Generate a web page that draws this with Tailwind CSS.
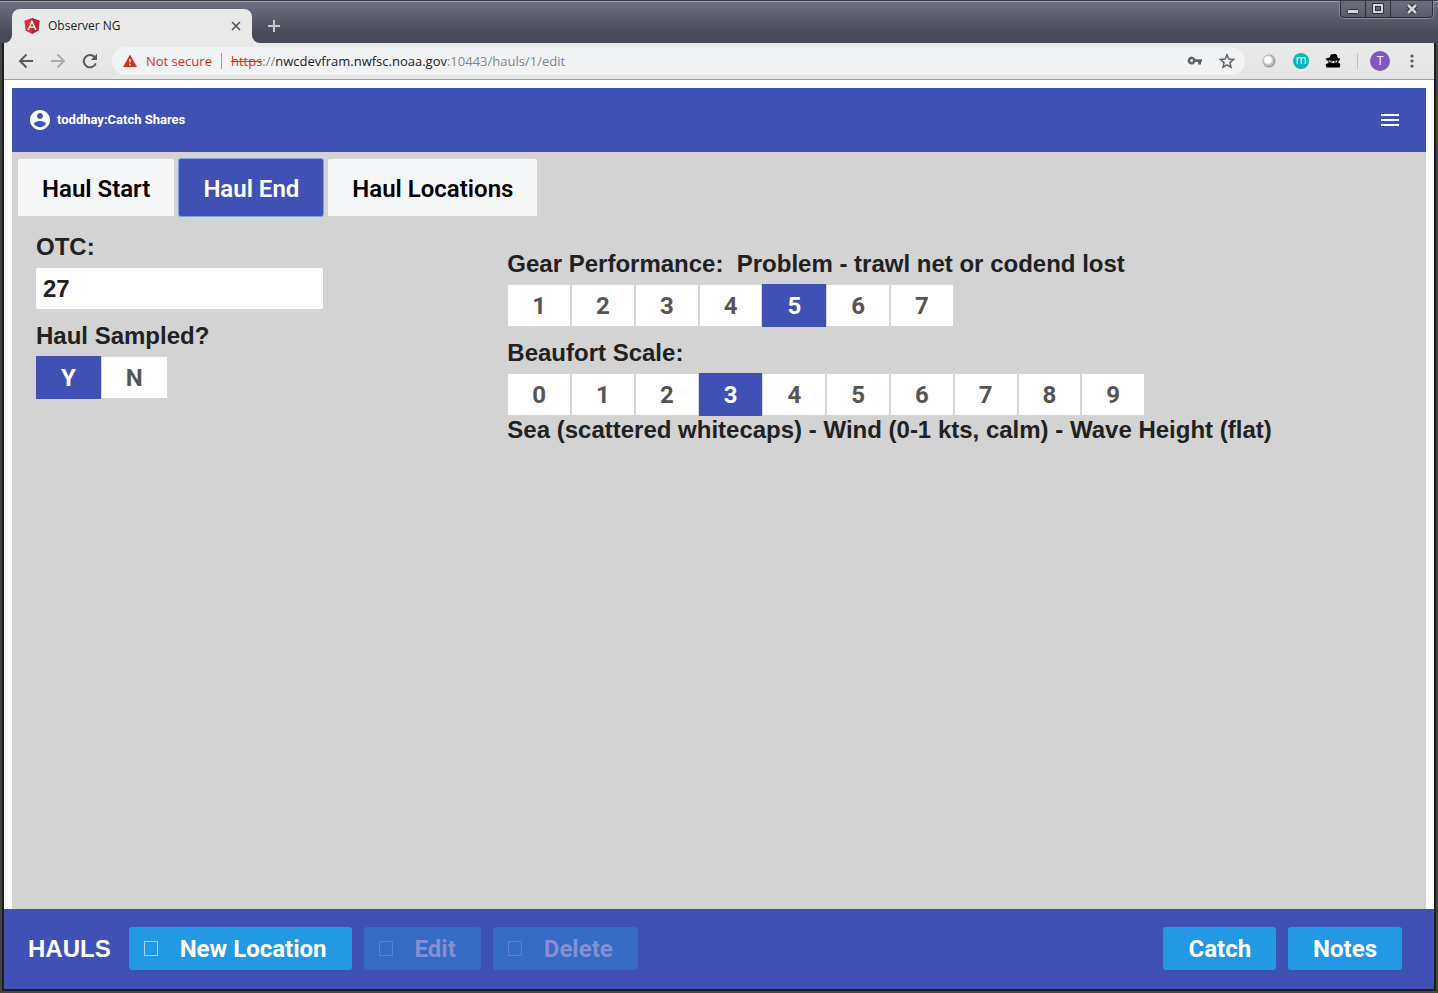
<!DOCTYPE html>
<html lang="en">
<head>
<meta charset="utf-8">
<meta name="viewport" content="width=device-width, initial-scale=1">
<title>Observer NG</title>
<script src="https://cdn.jsdelivr.net/npm/@tailwindcss/browser@4"></script>
</head>
<body class="bg-[#222222]">
<div class="flex min-h-screen flex-col font-['Liberation_Sans',sans-serif] text-[#212121]">

  <!-- Window title bar -->
  <header class="flex h-[43px] items-start justify-between border-t border-[#3b3d46] bg-linear-to-b from-[#6d7080] to-[#484a57] to-80% pl-1 font-['Open_Sans',sans-serif] shadow-[inset_0_1px_0_#9a9caa]">
    <div class="flex h-[42px] items-end">
      <svg class="h-2 w-2 fill-[#e9e9e9]" viewBox="0 0 8 8"><path d="M8 0v8H0a8 8 0 0 0 8-8z"/></svg>
      <div class="flex h-[34px] w-60 items-center rounded-t-lg bg-[#e9e9e9] pr-[10px] pl-3">
        <svg class="h-4 w-4" viewBox="0 0 16 16"><path fill="#dd3037" d="M8 0 15.600 2.700 14.400 12.500 8 16 1.600 12.500.4 2.700z"/><path fill="#b5272d" d="M8 0 15.600 2.700 14.400 12.500 8 16z"/><path fill="#fff" fill-rule="evenodd" d="M8 1.800 12.600 12h-1.700L10 9.800H6L5.100 12H3.400zM8 5 6.600 8.400h2.800z"/></svg>
        <span class="ml-2 flex-1 text-[12px] text-[#202124]">Observer NG</span>
        <button aria-label="Close tab" class="flex h-3 w-3 items-center justify-center"><svg class="h-3 w-3 stroke-[#505256]" viewBox="0 0 12 12" fill="none" stroke-width="1.600"><path d="m2 2 8 8M10 2 2 10"/></svg></button>
      </div>
      <svg class="h-2 w-2 fill-[#e9e9e9]" viewBox="0 0 8 8"><path d="M0 0v8h8a8 8 0 0 1-8-8z"/></svg>
      <button aria-label="New tab" class="mb-[11px] ml-2 h-3 w-3"><svg class="h-3 w-3 stroke-[#c9cace]" viewBox="0 0 12 12" fill="none" stroke-width="2"><path d="M6 0v12M0 6h12"/></svg></button>
    </div>
    <div class="mr-[5px] flex h-[17px] rounded-b border border-t-0 border-[#2c2e36] bg-linear-to-b from-[#6b6e7d] to-[#5a5d69] shadow-[0_1px_0_#858793,1px_0_0_#858793,-1px_0_0_#858793]">
      <button aria-label="Minimize" class="flex w-[25px] items-center justify-center border-r border-[#2c2e36]"><svg class="h-3 w-3" viewBox="0 0 12 12"><rect x=".5" y="6.500" width="11" height="4" rx="1" fill="#d4d4d6" stroke="#33353d"/></svg></button>
      <button aria-label="Maximize" class="flex w-[25px] items-center justify-center border-r border-[#2c2e36]"><svg class="h-3 w-3" viewBox="0 0 12 12" fill="none"><rect x="2" y="2" width="8" height="7" stroke="#33353d" stroke-width="4"/><rect x="2" y="2" width="8" height="7" stroke="#d4d4d6" stroke-width="2"/></svg></button>
      <button aria-label="Close" class="flex w-[41px] items-center justify-center"><svg class="h-3 w-3" viewBox="0 0 12 12" fill="none"><path d="m2 2 8 8M10 2 2 10" stroke="#33353d" stroke-width="5"/><path d="m2 2 8 8M10 2 2 10" stroke="#d4d4d6" stroke-width="2.500"/></svg></button>
    </div>
  </header>

  <div class="flex flex-1 flex-col border-x-2 border-b-2 border-[#454545]">
  <div class="flex flex-1 flex-col border-x-2 border-b-2 border-[#1f1f1f] bg-white">
    <!-- Browser toolbar -->
    <div class="flex h-[37px] items-center border-b border-[#a0a0a0] bg-linear-to-b from-[#e9e9e9] to-[#e5e5e5] pr-[14px] pl-[14px] font-['Open_Sans',sans-serif] text-[14px]">
      <button aria-label="Back"><svg class="h-4 w-4 stroke-[#5a5a5a]" viewBox="0 0 16 16" fill="none" stroke-width="2"><path d="M15 8H2M8.500 1.500 2 8l6.500 6.500"/></svg></button>
      <button aria-label="Forward" class="ml-4"><svg class="h-4 w-4 stroke-[#acacac]" viewBox="0 0 16 16" fill="none" stroke-width="2"><path d="M1 8h13M7.500 1.500 14 8l-6.500 6.500"/></svg></button>
      <button aria-label="Reload" class="ml-4"><svg class="h-4 w-4" viewBox="0 0 16 16"><path d="M13.800 10.300A6.200 6.200 0 1 1 12.600 4" fill="none" stroke="#5a5a5a" stroke-width="2"/><path d="M15 .8V7H8.800z" fill="#5a5a5a"/></svg></button>
      <div class="ml-[14px] flex h-7 flex-1 items-center rounded-full bg-[#f1f3f4] pr-[10px] pl-[11px]">
        <svg class="h-[14px] w-[14px]" viewBox="0 0 14 14"><path fill="#d93025" d="M7 .5 14 13H0z"/><path fill="#fff" d="M6.300 5h1.400v3.500H6.300zM6.300 9.800h1.400v1.400H6.300z"/></svg>
        <span class="ml-[9px] pt-px text-[13px] text-[#d93025]">Not secure</span>
        <span class="mx-[9px] h-4 w-px bg-[#9a9c9f]"></span>
        <span class="flex-1 pt-px text-[13px] whitespace-nowrap text-[#80868b]"><span class="text-[#d93025] line-through">https</span>://<span class="text-[#202124]">nwcdevfram.nwfsc.noaa.gov</span>:10443/hauls/1/edit</span>
        <button aria-label="Saved passwords"><svg class="h-4 w-4 fill-[#5f6368]" viewBox="0 0 16 16"><path fill-rule="evenodd" d="M8.300 6.200A4 4 0 1 0 8.300 9H11v2.500h3V9h1V6.200zM4.600 6.200a1.400 1.400 0 1 1 0 2.800 1.400 1.400 0 0 1 0-2.800z"/></svg></button>
        <button aria-label="Bookmark this page" class="ml-4"><svg class="h-4 w-4 stroke-[#5f6368]" viewBox="0 0 16 16" fill="none" stroke-width="1.500"><path d="m8 1.800 1.800 4.300 4.700.4-3.600 3.100 1.100 4.600L8 11.800l-4 2.400 1.100-4.600L1.500 6.500l4.700-.4z"/></svg></button>
      </div>
      <div class="ml-4 flex items-center">
        <svg class="h-4 w-4" viewBox="0 0 16 16"><circle cx="8" cy="8" r="6.500" fill="#9b9b9b"/><circle cx="7.500" cy="7.500" r="5.500" fill="#c8c8c8"/><circle cx="7" cy="7" r="3.800" fill="#fff"/></svg>
        <span class="ml-4 flex h-4 w-4 items-center justify-center rounded-full bg-linear-to-b from-[#08c0a0] to-[#0eacc4] pb-[2px] text-[12px] leading-none text-white">m</span>
        <svg class="ml-4 h-4 w-4" viewBox="0 0 16 16"><path d="M5.500 2 7 1l1.500.3L10 .8l2 1.200.8 3 2.200.5v1.300L13.500 8v2l1.800 1-.6 3.500H1L1.600 13l-1-.5.4-1.500 2.500-1V8.300L1.200 7 .8 5.600 4.800 4.600z"/><path d="M3.500 7.300q4.500 1.500 9 0l-1.200 2.500q-4 1-6.600-.7z" fill="#e8e8e8"/><path d="M5.500 8.400h2v.9h-2zM9 8.600h2v.8H9z"/></svg>
        <span class="ml-4 h-4 w-px bg-[#bdbdbd]"></span>
        <button class="ml-3 flex h-5 w-5 items-center justify-center rounded-full bg-[#7e57c2] font-['Roboto',sans-serif] text-[12px] text-white/90" aria-label="Profile T">T</button>
        <button aria-label="Browser menu" class="ml-[14px]"><svg class="h-4 w-4 fill-[#5a5a5a]" viewBox="0 0 16 16"><circle cx="8" cy="3" r="1.600"/><circle cx="8" cy="8" r="1.600"/><circle cx="8" cy="13" r="1.600"/></svg></button>
      </div>
    </div>

    <!-- Application -->
    <div class="mx-2 mt-2 flex flex-1 flex-col bg-[#d3d3d3]">
      <div class="flex h-16 items-center justify-between bg-[#3f51b5] pr-6 pl-4 text-white">
        <div class="flex items-center gap-[5px]">
          <svg class="h-6 w-6 fill-white" viewBox="0 0 24 24"><path d="M12 2C6.480 2 2 6.480 2 12s4.480 10 10 10 10-4.480 10-10S17.520 2 12 2zm0 3c1.660 0 3 1.340 3 3s-1.340 3-3 3-3-1.340-3-3 1.340-3 3-3zm0 14.200c-2.500 0-4.710-1.280-6-3.220.03-1.990 4-3.080 6-3.080 1.990 0 5.970 1.090 6 3.080-1.290 1.940-3.500 3.220-6 3.220z"/></svg>
          <span class="font-['Roboto',sans-serif] text-[13px] font-bold">toddhay:Catch Shares</span>
        </div>
        <button aria-label="Menu"><svg class="h-6 w-6 fill-white" viewBox="0 0 24 24"><path d="M3 18h18v-2H3v2zm0-5h18v-2H3v2zm0-7v2h18V6H3z"/></svg></button>
      </div>

      <nav class="flex gap-[5px] px-[6px] pt-[7px] font-['Roboto',sans-serif] text-2xl font-semibold text-black">
        <button class="h-[57px] rounded-t-xs bg-[#f6f7f9] px-6 pt-[2px]">Haul Start</button>
        <button aria-current="page" class="h-[57px] rounded-xs bg-[#3f51b5] px-6 pt-[2px] text-white shadow-[0_0_0_1px_#7ba3e6]">Haul End</button>
        <button class="h-[57px] rounded-t-xs bg-[#f6f7f9] px-6 pt-[2px]">Haul Locations</button>
      </nav>

      <main class="grid grid-cols-3 px-6 text-2xl font-bold">
        <div class="pt-[14px]">
          <label for="otc" class="block h-[38px] leading-[34px]">OTC:</label>
          <input id="otc" type="text" value="27" class="block h-[41px] w-[287px] rounded-xs bg-white px-[7px] outline-none">
          <div id="sampled" class="mt-[9px] h-[38px] leading-9">Haul Sampled?</div>
          <div role="group" aria-labelledby="sampled" class="flex font-['Roboto',sans-serif] text-[#555555]">
            <button aria-pressed="true" class="h-[43px] border border-[#3f51b5] bg-[#3f51b5] px-6 text-white">Y</button>
            <button aria-pressed="false" class="h-[43px] border border-[#d6d6d6] bg-white px-6">N</button>
          </div>
        </div>
        <div class="col-span-2 pt-[30px] pl-4">
          <div id="gear" class="h-[38px] leading-9 whitespace-pre">Gear Performance:  Problem - trawl net or codend lost</div>
          <div role="group" aria-labelledby="gear" class="flex font-['Roboto',sans-serif] text-[#555555]">
            <button class="h-[43px] border border-[#d6d6d6] bg-white px-6">1</button>
            <button class="h-[43px] border border-[#d6d6d6] bg-white px-6">2</button>
            <button class="h-[43px] border border-[#d6d6d6] bg-white px-6">3</button>
            <button class="h-[43px] border border-[#d6d6d6] bg-white px-6">4</button>
            <button aria-pressed="true" class="h-[43px] border border-[#3f51b5] bg-[#3f51b5] px-6 text-white">5</button>
            <button class="h-[43px] border border-[#d6d6d6] bg-white px-6">6</button>
            <button class="h-[43px] border border-[#d6d6d6] bg-white px-6">7</button>
          </div>
          <div id="beaufort" class="mt-2 h-[38px] leading-9">Beaufort Scale:</div>
          <div role="group" aria-labelledby="beaufort" class="flex font-['Roboto',sans-serif] text-[#555555]">
            <button class="h-[43px] border border-[#d6d6d6] bg-white px-6">0</button>
            <button class="h-[43px] border border-[#d6d6d6] bg-white px-6">1</button>
            <button class="h-[43px] border border-[#d6d6d6] bg-white px-6">2</button>
            <button aria-pressed="true" class="h-[43px] border border-[#3f51b5] bg-[#3f51b5] px-6 text-white">3</button>
            <button class="h-[43px] border border-[#d6d6d6] bg-white px-6">4</button>
            <button class="h-[43px] border border-[#d6d6d6] bg-white px-6">5</button>
            <button class="h-[43px] border border-[#d6d6d6] bg-white px-6">6</button>
            <button class="h-[43px] border border-[#d6d6d6] bg-white px-6">7</button>
            <button class="h-[43px] border border-[#d6d6d6] bg-white px-6">8</button>
            <button class="h-[43px] border border-[#d6d6d6] bg-white px-6">9</button>
          </div>
          <p class="leading-7">Sea (scattered whitecaps) - Wind (0-1 kts, calm) - Wave Height (flat)</p>
        </div>
      </main>
    </div>

    <!-- Action bar -->
    <footer class="flex h-20 items-center gap-3 bg-[#3f51b5] pr-8 pb-[2px] pl-6 text-2xl font-bold text-white">
      <span class="mr-[6px] pt-[2px]">HAULS</span>
      <button class="flex h-[43px] items-center rounded-[3px] bg-[#2399e5] pt-px pr-[25px] pl-[15px] font-['Roboto',sans-serif]"><span class="mr-[22px] h-[15px] w-[14px] border border-[#9fd3f5]"></span>New Location</button>
      <button disabled class="flex h-[43px] items-center rounded-[3px] bg-[#356bc4] pt-px pr-[25px] pl-[15px] font-['Roboto',sans-serif] text-[#858fd2]"><span class="mr-[22px] h-[15px] w-[14px] border border-[#5c80cd]"></span>Edit</button>
      <button disabled class="flex h-[43px] items-center rounded-[3px] bg-[#356bc4] pt-px pr-[25px] pl-[15px] font-['Roboto',sans-serif] text-[#858fd2]"><span class="mr-[22px] h-[15px] w-[14px] border border-[#5c80cd]"></span>Delete</button>
      <button class="ml-auto h-[43px] rounded-[3px] bg-[#2399e5] px-[25px] pt-px font-['Roboto',sans-serif]">Catch</button>
      <button class="h-[43px] rounded-[3px] bg-[#2399e5] px-[25px] pt-px font-['Roboto',sans-serif]">Notes</button>
    </footer>
  </div>
  </div>
</div>
</body>
</html>
